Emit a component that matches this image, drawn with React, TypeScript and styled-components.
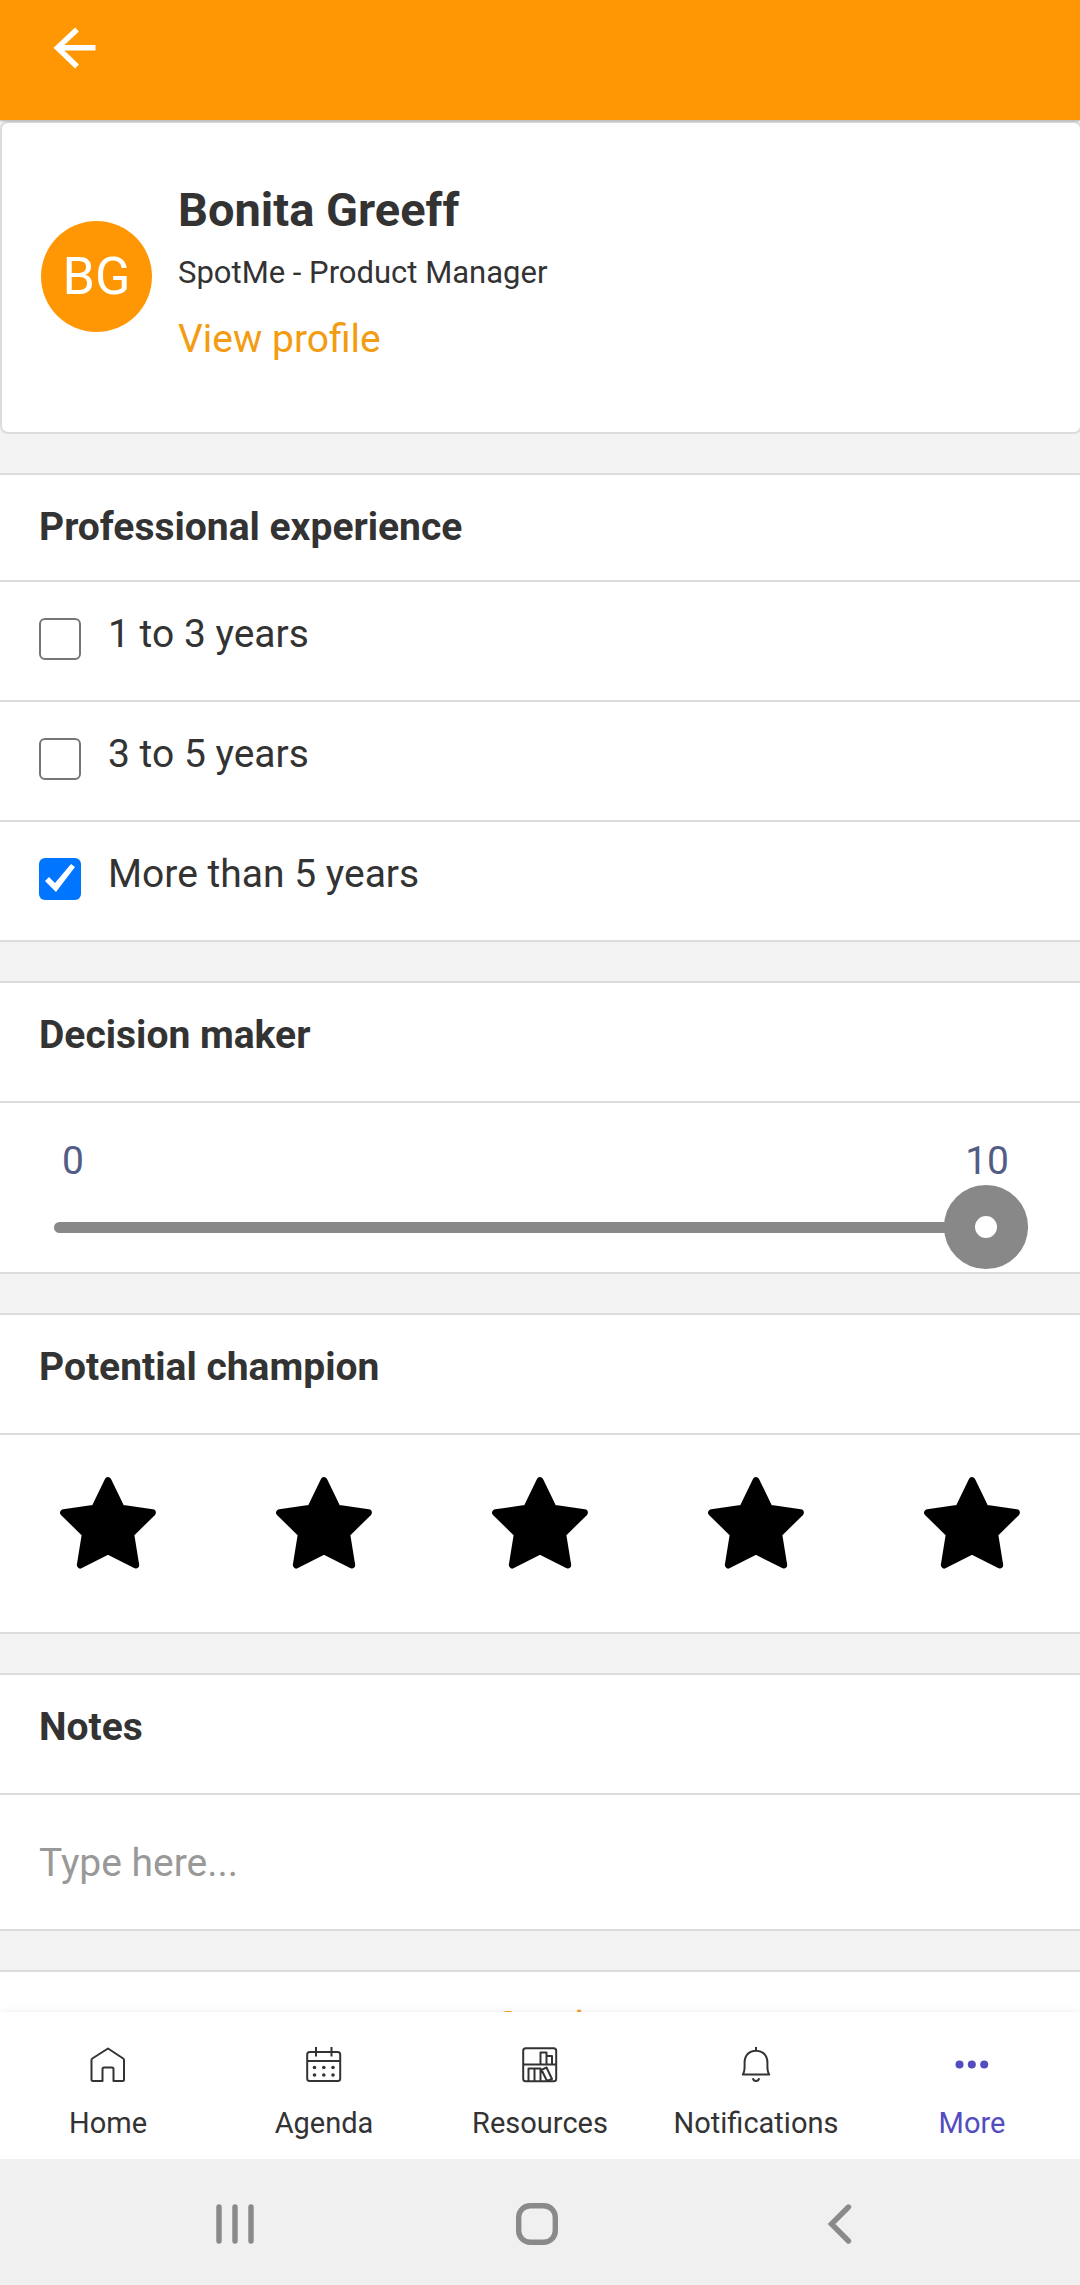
import React, { useState } from "react";
import styled, { createGlobalStyle } from "styled-components";

const color = {
  brand: "#ff9704",
  brandText: "#f39c12",
  ink: "#333333",
  line: "#dcdcdc",
  canvas: "#f3f3f3",
  grey: "#888888",
  scale: "#525c85",
  active: "#534cbf",
};

const GlobalStyle = createGlobalStyle`
  *, *::before, *::after { box-sizing: border-box; }
  body {
    margin: 0;
    background: ${color.canvas};
    color: ${color.ink};
    font-family: Roboto, "Liberation Sans", sans-serif;
    font-size: 39px;
  }
  button, input { font: inherit; color: inherit; }
  button { border: 0; padding: 0; background: none; cursor: pointer; }
`;

const Screen = styled.div`
  display: flex;
  flex-direction: column;
  height: 100vh;
`;

const Header = styled.header`
  flex: none;
  display: flex;
  align-items: flex-start;
  padding: 26px 52px 50px;
  background: ${color.brand};
  box-shadow: 0 1px 2px rgba(0, 0, 0, 0.3);
  z-index: 1;
`;

const BackButton = styled.button`
  display: flex;
  color: #fff;
`;

const Content = styled.main`
  flex: 1;
  min-height: 0;
  overflow-x: hidden;
  overflow-y: auto;
  scrollbar-width: none;
  display: flex;
  flex-direction: column;
  gap: 39px;
  padding-top: 1px;

  & > * { flex: none; }
`;

const ProfileCard = styled.section`
  display: flex;
  align-items: flex-start;
  gap: 26px;
  margin-right: -2px;
  padding: 59px 39px 69px;
  border: 2px solid ${color.line};
  border-radius: 8px;
  background: #fff;
`;

const Avatar = styled.div`
  flex: none;
  display: grid;
  place-items: center;
  width: 111px;
  height: 111px;
  margin-top: 39px;
  border-radius: 50%;
  background: ${color.brand};
  color: #fff;
  font-size: 52px;
  line-height: 56px;
`;

const ProfileInfo = styled.div`
  display: flex;
  flex-direction: column;
  align-items: flex-start;
`;

const Name = styled.h1`
  margin: 0 0 15px;
  font-size: 47px;
  line-height: 56px;
  font-weight: 700;
`;

const Role = styled.p`
  margin: 0 0 22px;
  font-size: 31px;
  line-height: 40px;
`;

const ProfileLink = styled.a`
  color: ${color.brandText};
  line-height: 48px;
  text-decoration: none;
`;

const Panel = styled.section`
  border: solid ${color.line};
  border-width: 2px 0;
  background: #fff;
`;

const PanelTitle = styled.h2<{ $compact?: boolean }>`
  margin: 0;
  padding: 22px 39px ${(p) => (p.$compact ? 23 : 36)}px;
  border-bottom: 2px solid ${color.line};
  font-size: 39px;
  line-height: 60px;
  font-weight: 700;
`;

const Option = styled.label`
  display: flex;
  align-items: flex-start;
  gap: 27px;
  padding: 22px 39px 36px;
  line-height: 60px;

  & + & { border-top: 2px solid ${color.line}; }
`;

const Checkbox = styled.input`
  appearance: none;
  flex: none;
  width: 42px;
  height: 42px;
  margin: 14px 0 0;
  border: 2px solid #767676;
  border-radius: 6px;
  background: #fff;

  &:checked {
    border: 0;
    background: #0075ff;
  }
  &:checked::before {
    content: "";
    display: block;
    width: 42px;
    height: 42px;
    background: #fff;
    clip-path: polygon(6px 23px, 10px 19px, 16px 25px, 32px 6px, 36px 9px, 17px 34px);
  }
`;

const SliderBody = styled.div`
  padding: 34px 52px 3px 54px;
`;

const Scale = styled.div`
  display: flex;
  justify-content: space-between;
  padding: 0 19px 0 8px;
  color: ${color.scale};
  line-height: 48px;
`;

const Slider = styled.input`
  appearance: none;
  display: block;
  width: 100%;
  height: 84px;
  margin: 0;
  background: none;

  &::-webkit-slider-runnable-track {
    height: 11px;
    border-radius: 6px;
    background: ${color.grey};
  }
  &::-webkit-slider-thumb {
    appearance: none;
    width: 84px;
    height: 84px;
    margin-top: -37px;
    border: 31px solid ${color.grey};
    border-radius: 50%;
    background: #fff;
  }
`;

const Stars = styled.div`
  display: grid;
  grid-template-columns: repeat(5, 1fr);
  padding: 42px 0 63px;
`;

const StarButton = styled.button<{ $on: boolean }>`
  display: flex;
  justify-content: center;
  color: ${(p) => (p.$on ? "#000" : "#ccc")};
`;

const NotesInput = styled.input`
  display: block;
  width: 100%;
  padding: 44px 39px 42px;
  border: 0;
  outline: 0;
  background: none;
  height: 134px;

  &::placeholder { color: #999; opacity: 1; }
`;

const SendButton = styled.button`
  width: 100%;
  padding: 24px 39px 35px;
  color: ${color.brandText};
  line-height: 60px;
`;

const TabBar = styled.nav`
  flex: none;
  display: grid;
  grid-template-columns: repeat(5, 1fr);
  padding: 35px 0 16px;
  background: #fff;
  box-shadow: 0 0 8px rgba(0, 0, 0, 0.07);
  z-index: 1;
`;

const Tab = styled.a<{ $active?: boolean }>`
  display: flex;
  flex-direction: column;
  align-items: center;
  gap: 20px;
  color: ${(p) => (p.$active ? color.active : color.ink)};
  font-size: 29px;
  line-height: 40px;
  text-decoration: none;
`;

const SystemBar = styled.footer`
  flex: none;
  display: grid;
  grid-template-columns: repeat(3, 1fr);
  padding: 44px 90px 40px 84px;
  background: #f0f0f0;
  z-index: 1;
`;

const SystemButton = styled.button`
  display: flex;
  justify-content: center;
`;

const TabIcon = ({ children }: { children: React.ReactNode }) => (
  <svg width="36" height="36" viewBox="0 0 36 36" fill="none" stroke="currentColor" strokeWidth="2" strokeLinejoin="round" aria-hidden="true">
    {children}
  </svg>
);

const SystemIcon = ({ children }: { children: React.ReactNode }) => (
  <svg width="42" height="42" viewBox="0 0 42 42" fill="none" stroke="#8a8a8a" strokeWidth="5.4" strokeLinecap="round" aria-hidden="true">
    {children}
  </svg>
);

const HomeIcon = () => (
  <TabIcon>
    <path d="M18 1.5 33.2 11.5Q34 12 34 13V32.5Q34 34 32.5 34H23.5V22Q23.5 20.5 22 20.5H14Q12.5 20.5 12.5 22V34H3Q1.5 34 1.5 32.5V13Q1.5 12 2.3 11.5Z" />
  </TabIcon>
);

const AgendaIcon = () => (
  <TabIcon>
    <rect x="1.2" y="5" width="33" height="29" rx="2.5" />
    <path d="M1.2 14H34.2M10 0V9.5M25.5 0V9.5" />
    <g fill="currentColor" stroke="none">
      {[20.5, 28].map((y) => [8.5, 17.8, 27].map((x) => <circle key={`${x}-${y}`} cx={x} cy={y} r="1.8" />))}
    </g>
  </TabIcon>
);

const ResourcesIcon = () => (
  <TabIcon>
    <rect x="1.2" y="1.2" width="33" height="33" rx="2.5" />
    <path d="M1.2 17.6H34.2M18.5 17.6V5.5H24.5V17.6M24.5 9H30V17.6" />
    <path d="M6.5 34V21.5H18.5V34M12.5 21.5V34M19.5 22.8 24.5 20.5 30 32 25 34Z" />
  </TabIcon>
);

const BellIcon = () => (
  <TabIcon>
    <path d="M18 0V3.5M4.8 27.5Q6.6 25 6.6 19V15.5C6.6 8.5 11 3.8 18 3.8S29.4 8.5 29.4 15.5V19Q29.4 25 31.2 27.5Z" />
    <path d="M14.8 31.2Q15.5 34 18 34T21.2 31.2" />
  </TabIcon>
);

const MoreIcon = () => (
  <TabIcon>
    <g fill="currentColor" stroke="none">
      <circle cx="5.5" cy="17.5" r="4" />
      <circle cx="17.8" cy="17.5" r="4" />
      <circle cx="30.2" cy="17.5" r="4" />
    </g>
  </TabIcon>
);

const tabs = [
  { label: "Home", Icon: HomeIcon },
  { label: "Agenda", Icon: AgendaIcon },
  { label: "Resources", Icon: ResourcesIcon },
  { label: "Notifications", Icon: BellIcon },
  { label: "More", Icon: MoreIcon, active: true },
];

const experience = ["1 to 3 years", "3 to 5 years", "More than 5 years"];

export default function App() {
  const [checked, setChecked] = useState([false, false, true]);
  const [decision, setDecision] = useState(10);
  const [rating, setRating] = useState(5);
  const [notes, setNotes] = useState("");

  return (
    <>
      <GlobalStyle />
      <Screen>
        <Header>
          <BackButton aria-label="Back">
            <svg width="44" height="44" viewBox="0 0 44 44" fill="none" stroke="currentColor" strokeWidth="5.5" aria-hidden="true">
              <path d="M25 3.5 5.5 21.8 25 40.5M5 21.8H43.5" />
            </svg>
          </BackButton>
        </Header>

        <Content>
          <ProfileCard>
            <Avatar>BG</Avatar>
            <ProfileInfo>
              <Name>Bonita Greeff</Name>
              <Role>SpotMe - Product Manager</Role>
              <ProfileLink href="#profile">View profile</ProfileLink>
            </ProfileInfo>
          </ProfileCard>

          <Panel>
            <PanelTitle $compact>Professional experience</PanelTitle>
            {experience.map((text, i) => (
              <Option key={text}>
                <Checkbox
                  type="checkbox"
                  checked={checked[i]}
                  onChange={() => setChecked(checked.map((c, j) => (j === i ? !c : c)))}
                />
                {text}
              </Option>
            ))}
          </Panel>

          <Panel>
            <PanelTitle id="decision">Decision maker</PanelTitle>
            <SliderBody>
              <Scale>
                <span>0</span>
                <span>10</span>
              </Scale>
              <Slider
                type="range"
                min={0}
                max={10}
                value={decision}
                onChange={(e) => setDecision(Number(e.target.value))}
                aria-labelledby="decision"
              />
            </SliderBody>
          </Panel>

          <Panel>
            <PanelTitle>Potential champion</PanelTitle>
            <Stars>
              {[1, 2, 3, 4, 5].map((n) => (
                <StarButton key={n} $on={n <= rating} aria-label={`${n} of 5 stars`} onClick={() => setRating(n)}>
                  <svg width="96" height="92" viewBox="0 0 288 276" aria-hidden="true">
                    <path
                      d="M144 11 184 94 277 107 212 171 227 264 144 222 61 264 76 171 11 107 104 94Z"
                      fill="currentColor"
                      stroke="currentColor"
                      strokeWidth="21"
                      strokeLinejoin="round"
                    />
                  </svg>
                </StarButton>
              ))}
            </Stars>
          </Panel>

          <Panel>
            <PanelTitle id="notes">Notes</PanelTitle>
            <NotesInput
              type="text"
              placeholder="Type here..."
              value={notes}
              onChange={(e) => setNotes(e.target.value)}
              aria-labelledby="notes"
            />
          </Panel>

          <Panel>
            <SendButton>Send</SendButton>
          </Panel>
        </Content>

        <TabBar>
          {tabs.map(({ label, Icon, active }) => (
            <Tab key={label} href={`#${label.toLowerCase()}`} $active={active}>
              <Icon />
              {label}
            </Tab>
          ))}
        </TabBar>

        <SystemBar>
          <SystemButton aria-label="Recent apps">
            <SystemIcon>
              <path d="M5 4V38M21 4V38M37 4V38" />
            </SystemIcon>
          </SystemButton>
          <SystemButton aria-label="Home screen">
            <SystemIcon>
              <rect x="2.7" y="2.7" width="36.6" height="36.6" rx="11.5" />
            </SystemIcon>
          </SystemButton>
          <SystemButton aria-label="Go back">
            <SystemIcon>
              <path d="M30.5 4 13.5 21 30.5 38" />
            </SystemIcon>
          </SystemButton>
        </SystemBar>
      </Screen>
    </>
  );
}
